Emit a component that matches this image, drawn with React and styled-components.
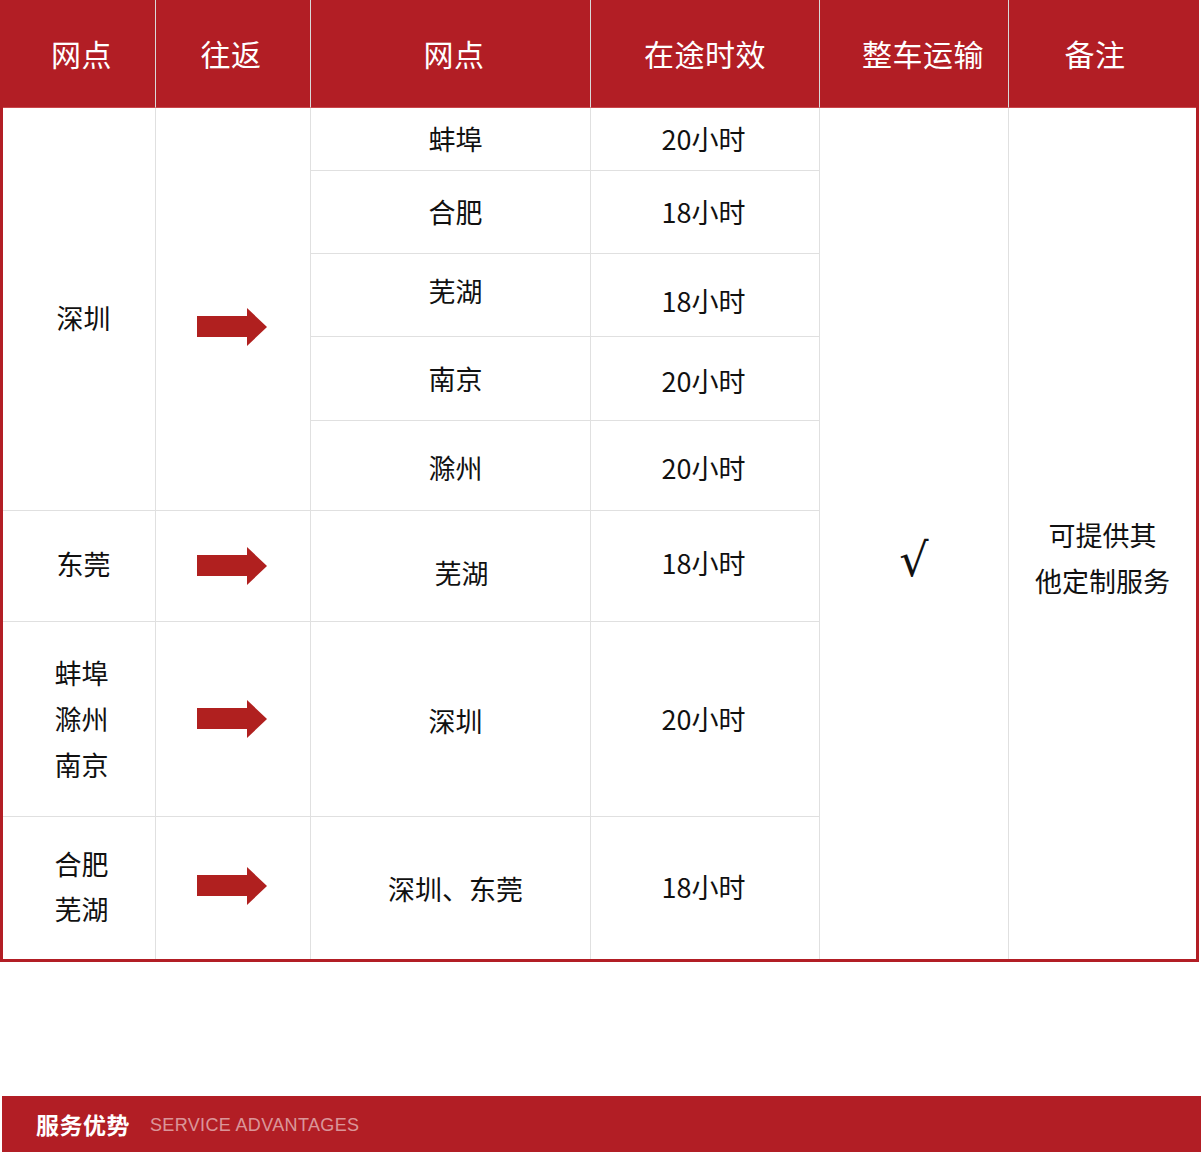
import React from "react";
import styled, { createGlobalStyle } from "styled-components";

const RED = "#b21e25";

const Global = createGlobalStyle`
  html, body { margin: 0; padding: 0; background: #fff; }
  body { font-family: "Noto Sans CJK SC", "Noto Sans", sans-serif; }
`;

const Page = styled.div`
  width: 1201px;
  display: flex;
  flex-direction: column;
`;

const Table = styled.table`
  width: 1199px;
  table-layout: fixed;
  border-collapse: separate;
  border-spacing: 0;
  border-left: 3px solid ${RED};
  border-right: 3px solid ${RED};
  border-bottom: 3px solid ${RED};
`;

const Row = styled.tr`
  height: ${(p) => p.$h}px;
`;

const Th = styled.th`
  background: ${RED};
  color: #fff;
  font-weight: 400;
  font-size: 30px;
  letter-spacing: 0.5px;
  text-align: center;
  vertical-align: middle;
  border-right: ${(p) => (p.$end ? "none" : "1px solid #d9d9d9")};
  border-bottom: 1px solid #c9474c;
  padding: 0 ${(p) => p.$pr || 0}px 2px ${(p) => p.$pl || 0}px;
`;

const Td = styled.td`
  font-size: 27px;
  color: #111;
  text-align: center;
  vertical-align: middle;
  line-height: ${(p) => p.$lh || 1.4};
  border-right: ${(p) => (p.$end ? "none" : "1px solid #e0e0e0")};
  border-bottom: ${(p) => (p.$last ? "none" : "1px solid #e0e0e0")};
  padding: ${(p) => p.$pt || 0}px ${(p) => p.$pr || 0}px ${(p) => p.$pb || 0}px
    ${(p) => p.$pl || 0}px;
`;

const Check = styled.span`
  display: inline-block;
  font-family: "DejaVu Sans", sans-serif;
  font-size: 46px;
  line-height: 1;
  color: #111;
`;

const Footer = styled.div`
  margin: 134px 0 0 2px;
  height: 56px;
  background: ${RED};
  display: flex;
  align-items: center;
  gap: 20px;
  padding-left: 34px;
`;

const FooterTitle = styled.span`
  color: #fff;
  font-size: 23px;
  font-weight: 700;
  letter-spacing: 0.5px;
`;

const FooterSub = styled.span`
  font-family: "Liberation Sans", Arial, sans-serif;
  font-size: 18px;
  letter-spacing: 0.35px;
  color: rgba(255, 255, 255, 0.55);
  padding-top: 2px;
`;

const Arrow = () => (
  <svg width="70" height="38" viewBox="0 0 70 38" style={{ display: "block" }}>
    <rect x="0" y="8" width="51" height="21" fill="#b0201f" />
    <polygon points="50,0 70,19 50,38" fill="#b0201f" />
  </svg>
);

const ArrowBox = styled.div`
  display: flex;
  justify-content: center;
  padding-right: 2px;
`;

const sub = [
  { place: "蚌埠", time: "20小时", h: 63 },
  { place: "合肥", time: "18小时", h: 83 },
  { place: "芜湖", time: "18小时", h: 83, ppb: 9, tpt: 11 },
  { place: "南京", time: "20小时", h: 84, tpt: 4 },
  { place: "滁州", time: "20小时", h: 90, ppt: 4, tpt: 4 },
];

export default function App() {
  return (
    <Page>
      <Global />
      <Table>
        <colgroup>
          <col style={{ width: 153 }} />
          <col style={{ width: 155 }} />
          <col style={{ width: 280 }} />
          <col style={{ width: 229 }} />
          <col style={{ width: 189 }} />
          <col style={{ width: 187 }} />
        </colgroup>
        <thead>
          <Row $h={108}>
            <Th $pl={5}>网点</Th>
            <Th $pr={4}>往返</Th>
            <Th $pl={7}>网点</Th>
            <Th>在途时效</Th>
            <Th $pl={18}>整车运输</Th>
            <Th $pr={15} $end>备注</Th>
          </Row>
        </thead>
        <tbody>
          {sub.map((s, i) => (
            <Row $h={s.h} key={s.place}>
              {i === 0 && (
                <>
                  <Td rowSpan={5} $pl={9} $pt={17}>深圳</Td>
                  <Td rowSpan={5} $pt={35}>
                    <ArrowBox><Arrow /></ArrowBox>
                  </Td>
                </>
              )}
              <Td $pl={10} $pt={s.ppt} $pb={s.ppb}>{s.place}</Td>
              <Td $pt={s.tpt} $pr={3}>{s.time}</Td>
              {i === 0 && (
                <>
                  <Td rowSpan={8} $last $pt={54}>
                    <Check>√</Check>
                  </Td>
                  <Td rowSpan={8} $last $end $pt={48} $lh={1.67}>
                    可提供其
                    <br />
                    他定制服务
                  </Td>
                </>
              )}
            </Row>
          ))}
          <Row $h={111}>
            <Td $pl={9} $pb={4}>东莞</Td>
            <Td>
              <ArrowBox><Arrow /></ArrowBox>
            </Td>
            <Td $pl={22} $pt={13}>芜湖</Td>
            <Td $pb={7} $pr={3}>18小时</Td>
          </Row>
          <Row $h={195}>
            <Td $pl={5} $lh={1.7}>
              蚌埠
              <br />
              滁州
              <br />
              南京
            </Td>
            <Td>
              <ArrowBox><Arrow /></ArrowBox>
            </Td>
            <Td $pl={10} $pt={4}>深圳</Td>
            <Td $pr={3}>20小时</Td>
          </Row>
          <Row $h={142}>
            <Td $pl={5} $lh={1.67} $last $pb={4}>
              合肥
              <br />
              芜湖
            </Td>
            <Td $last $pb={4}>
              <ArrowBox><Arrow /></ArrowBox>
            </Td>
            <Td $pl={10} $pt={2} $last>深圳、东莞</Td>
            <Td $last $pr={3} $pb={2}>18小时</Td>
          </Row>
        </tbody>
      </Table>
      <Footer>
        <FooterTitle>服务优势</FooterTitle>
        <FooterSub>SERVICE ADVANTAGES</FooterSub>
      </Footer>
    </Page>
  );
}
